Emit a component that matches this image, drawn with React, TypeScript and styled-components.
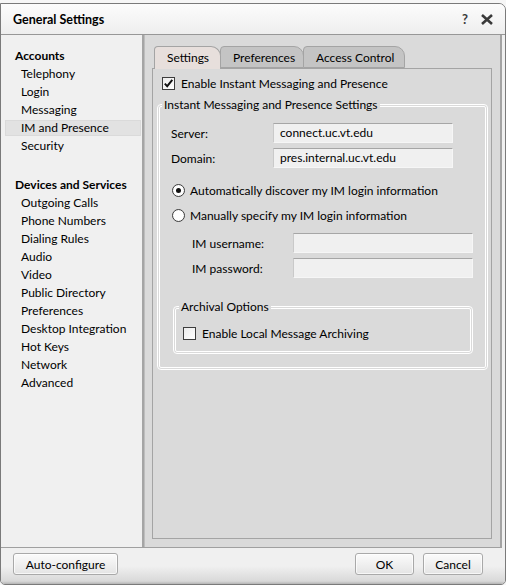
import React from "react";
import styled, { createGlobalStyle } from "styled-components";

const FONT = `"Segoe UI", Lato, "Liberation Sans", sans-serif`;

const GlobalStyle = createGlobalStyle`
  html, body { margin: 0; padding: 0; background: #f6f6f6; }
  body { font-family: ${FONT}; font-size: 12px; color: #000; }
  #root { padding-top: 3px; }
  * { box-sizing: border-box; }
`;

const Window = styled.div`
  width: 506px;
  height: 582px;
  border: 1px solid #7a7a7a;
  border-radius: 0 7px 5px 5px;
  background: #f0f0f0;
  display: flex;
  flex-direction: column;
  overflow: hidden;
`;

const TitleBar = styled.div`
  height: 31px;
  flex: none;
  display: flex;
  align-items: center;
  justify-content: space-between;
  padding: 1px 11px 0 12px;
  background: linear-gradient(#fcfcfc, #eeeeee);
  border-bottom: 1px solid #979797;
`;

const Title = styled.div`
  font-weight: bold;
  font-size: 12.5px;
`;

const TitleButtons = styled.div`
  display: flex;
  align-items: center;
  gap: 12px;
  color: #3c3c3c;
`;

const HelpGlyph = styled.span`
  font-weight: bold;
  font-size: 13px;
  line-height: 1;
`;

const Body = styled.div`
  flex: 1;
  display: flex;
  margin-right: 3px;
  border-bottom: 1px solid #a0a0a0;
  min-height: 0;
`;

const Sidebar = styled.div`
  width: 143px;
  flex: none;
  display: flex;
  flex-direction: column;
  background: #f0f0f0;
  border-right: 2px solid #a5a5a5;
  padding-top: 12px;
`;

const SectionHeading = styled.div<{ $gap?: number }>`
  font-weight: bold;
  line-height: 18px;
  padding-left: 14px;
  margin-top: ${(p) => p.$gap ?? 0}px;
`;

const NavItem = styled.div<{ $active?: boolean }>`
  height: 16px;
  margin: 1px 1px 1px 4px;
  line-height: 16px;
  padding-left: 16px;
  background: ${(p) => (p.$active ? "#e2e2e2" : "transparent")};
  box-shadow: ${(p) => (p.$active ? "inset 0 0 0 1px #dadada" : "none")};
`;

const Main = styled.div`
  flex: 1;
  display: flex;
  flex-direction: column;
  background: #dadada;
  border-left: 1px solid #bdbdbd;
  border-right: 2px solid #a3a3a3;
  padding: 11px 8px 8px 7px;
`;

const Tabs = styled.div`
  display: flex;
  align-items: flex-end;
  height: 22px;
  margin-left: 2px;
`;

const Tab = styled.div<{ $active?: boolean; $width: number }>`
  position: relative;
  z-index: ${(p) => (p.$active ? 2 : 1)};
  width: ${(p) => p.$width}px;
  height: ${(p) => (p.$active ? 23 : 22)}px;
  margin-bottom: ${(p) => (p.$active ? -1 : 0)}px;
  padding-left: 12px;
  line-height: 21px;
  background: ${(p) => (p.$active ? "#e7dfdc" : "#c4c4c4")};
  border: 1px solid #a4a4a4;
  border-bottom: ${(p) => (p.$active ? "none" : "1px solid #a4a4a4")};
  border-radius: 4px 10px 0 0;
  margin-right: -1px;
`;

const Pane = styled.div`
  flex: 1;
  border: 1px solid #a4a4a4;
  background: #dadada;
  padding: 8px 3px 0 9px;
  display: flex;
  flex-direction: column;
`;

const CheckRow = styled.label<{ $height?: number }>`
  display: flex;
  align-items: center;
  gap: 6px;
  height: ${(p) => p.$height ?? 13}px;
`;

const Box = styled.span`
  width: 13px;
  height: 13px;
  flex: none;
  border: 1px solid #3d3d3d;
  background: linear-gradient(135deg, #ececec, #ffffff);
  display: flex;
  align-items: center;
  justify-content: center;
`;

const RadioRow = styled.label<{ $gap?: number }>`
  display: flex;
  align-items: center;
  gap: 5px;
  height: 16px;
  padding-left: 1px;
  margin-top: ${(p) => p.$gap ?? 0}px;
`;

const RadioCircle = styled.span<{ $checked?: boolean }>`
  width: 13px;
  height: 13px;
  flex: none;
  border-radius: 50%;
  border: 1px solid #3d3d3d;
  background: radial-gradient(circle, #ffffff 55%, #e6e6e6 100%);
  display: flex;
  align-items: center;
  justify-content: center;
  &::after {
    content: "";
    width: 5px;
    height: 5px;
    border-radius: 50%;
    background: ${(p) => (p.$checked ? "#111" : "transparent")};
  }
`;

const Group = styled.fieldset<{ $margin: string }>`
  margin: ${(p) => p.$margin};
  padding: 0;
  min-width: 0;
  border: 3px double #ffffff;
  border-radius: 4px;
`;

const Legend = styled.legend<{ $offset?: number }>`
  margin-left: ${(p) => p.$offset ?? 2}px;
  padding: 0 2px;
  line-height: 16px;
  font-size: 12px;
`;

const GroupBody = styled.div<{ $padding: string }>`
  padding: ${(p) => p.$padding};
  display: flex;
  flex-direction: column;
`;

const FieldRow = styled.div<{ $indent?: number; $gap?: number }>`
  display: flex;
  align-items: center;
  height: 20px;
  padding-left: ${(p) => p.$indent ?? 0}px;
  margin-top: ${(p) => p.$gap ?? 0}px;
`;

const FieldLabel = styled.span<{ $width: number }>`
  width: ${(p) => p.$width}px;
  flex: none;
`;

const TextBox = styled.div`
  width: 180px;
  height: 20px;
  flex: none;
  background: #f0f0f0;
  border: 1px solid;
  border-color: #a6a6a6 #f6f6f6 #f6f6f6 #c9c9c9;
  padding-left: 6px;
  line-height: 18px;
`;

const Footer = styled.div`
  height: 36px;
  flex: none;
  display: flex;
  align-items: flex-start;
  gap: 9px;
  padding: 5px 22px 0 12px;
  background: linear-gradient(#f0f0f0 0%, #f0f0f0 50%, #d9d9d9 92%, #b5b5b5 100%);
`;

const Spacer = styled.div`
  flex: 1;
`;

const Button = styled.button<{ $width: number }>`
  width: ${(p) => p.$width}px;
  height: 22px;
  font-family: ${FONT};
  font-size: 12px;
  color: #000;
  border: 1px solid #a9a9a9;
  border-radius: 3px;
  background: linear-gradient(#fbfbfb, #f0f0f0 50%, #e4e4e4);
  box-shadow: inset 0 0 0 1px rgba(255, 255, 255, 0.7);
  padding: 0;
`;

const CheckMark = () => (
  <svg width="11" height="11" viewBox="0 0 11 11">
    <path d="M1.8 5.6 L4.2 8.2 L9.3 1.8" fill="none" stroke="#111" strokeWidth="1.9" />
  </svg>
);

const CloseIcon = () => (
  <svg width="14" height="11" viewBox="0 0 14 11">
    <path d="M2 1 L12 10 M12 1 L2 10" stroke="#3a3a3a" strokeWidth="2.6" strokeLinecap="butt" />
  </svg>
);

const accounts = ["Telephony", "Login", "Messaging", "IM and Presence", "Security"];
const devices = [
  "Outgoing Calls",
  "Phone Numbers",
  "Dialing Rules",
  "Audio",
  "Video",
  "Public Directory",
  "Preferences",
  "Desktop Integration",
  "Hot Keys",
  "Network",
  "Advanced",
];

export default function App() {
  return (
    <>
      <GlobalStyle />
      <Window>
        <TitleBar>
          <Title>General Settings</Title>
          <TitleButtons>
            <HelpGlyph>?</HelpGlyph>
            <CloseIcon />
          </TitleButtons>
        </TitleBar>
        <Body>
          <Sidebar>
            <SectionHeading>Accounts</SectionHeading>
            {accounts.map((a) => (
              <NavItem key={a} $active={a === "IM and Presence"}>
                {a}
              </NavItem>
            ))}
            <SectionHeading $gap={21}>Devices and Services</SectionHeading>
            {devices.map((d) => (
              <NavItem key={d}>{d}</NavItem>
            ))}
          </Sidebar>
          <Main>
            <Tabs>
              <Tab $active $width={67}>Settings</Tab>
              <Tab $width={84}>Preferences</Tab>
              <Tab $width={102}>Access Control</Tab>
            </Tabs>
            <Pane>
              <CheckRow>
                <Box>
                  <CheckMark />
                </Box>
                Enable Instant Messaging and Presence
              </CheckRow>
              <Group $margin="7px 0 0 -5px">
                <Legend>Instant Messaging and Presence Settings</Legend>
                <GroupBody $padding="10px 12px 13px 11px">
                  <FieldRow>
                    <FieldLabel $width={102}>Server:</FieldLabel>
                    <TextBox>connect.uc.vt.edu</TextBox>
                  </FieldRow>
                  <FieldRow $gap={5}>
                    <FieldLabel $width={102}>Domain:</FieldLabel>
                    <TextBox>pres.internal.uc.vt.edu</TextBox>
                  </FieldRow>
                  <RadioRow $gap={14}>
                    <RadioCircle $checked />
                    Automatically discover my IM login information
                  </RadioRow>
                  <RadioRow $gap={9}>
                    <RadioCircle />
                    Manually specify my IM login information
                  </RadioRow>
                  <FieldRow $indent={21} $gap={10}>
                    <FieldLabel $width={101}>IM username:</FieldLabel>
                    <TextBox />
                  </FieldRow>
                  <FieldRow $indent={21} $gap={5}>
                    <FieldLabel $width={101}>IM password:</FieldLabel>
                    <TextBox />
                  </FieldRow>
                  <Group $margin="21px 0 0 2px">
                    <Legend $offset={3}>Archival Options</Legend>
                    <GroupBody $padding="10px 7px 10px 7px">
                      <CheckRow $height={16}>
                        <Box />
                        Enable Local Message Archiving
                      </CheckRow>
                    </GroupBody>
                  </Group>
                </GroupBody>
              </Group>
            </Pane>
          </Main>
        </Body>
        <Footer>
          <Button $width={105}>Auto-configure</Button>
          <Spacer />
          <Button $width={59}>OK</Button>
          <Button $width={60}>Cancel</Button>
        </Footer>
      </Window>
    </>
  );
}
